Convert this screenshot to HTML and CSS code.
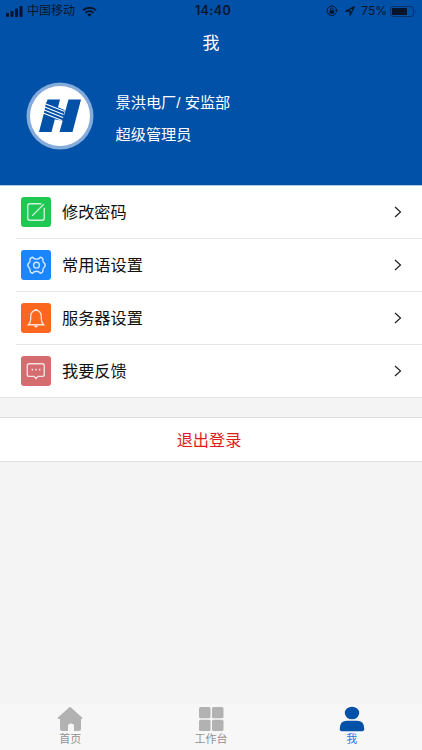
FILE: index.html
```html
<!DOCTYPE html>
<html lang="zh-CN">
<head>
    <meta charset="UTF-8">
    <meta name="viewport" content="width=device-width, initial-scale=1.0">
    <title>我</title>
    <link rel="stylesheet" href="styles.css">
</head>
<body>
    <div class="app">
        <header class="header">
            <div class="status-bar">
                <div class="status-left">
                    <svg class="signal" viewBox="0 0 17 11">
                        <rect x="0" y="7" width="3" height="4" rx="0.8"/>
                        <rect x="4.5" y="5" width="3" height="6" rx="0.8"/>
                        <rect x="9" y="2.5" width="3" height="8.5" rx="0.8"/>
                        <rect x="13.5" y="0" width="3" height="11" rx="0.8"/>
                    </svg>
                    <span class="carrier">中国移动</span>
                    <svg class="wifi" viewBox="0 0 15 11">
                        <path d="M1 4.2a9.5 9.5 0 0 1 13 0" fill="none" stroke="currentColor" stroke-width="2"/>
                        <path d="M3.5 6.8a5.8 5.8 0 0 1 8 0" fill="none" stroke="currentColor" stroke-width="1.8"/>
                        <path d="M5.3 8.6a3.2 3.2 0 0 1 4.4 0L7.5 10.8z"/>
                    </svg>
                </div>
                <span class="time">14:40</span>
                <div class="status-right">
                    <svg class="lock" viewBox="0 0 12 12">
                        <path d="M10.2 7.8a4.8 4.8 0 1 1 .4-2.6" fill="none" stroke="currentColor" stroke-width="1"/>
                        <path d="M9 5h3l-1.5 2.2z"/>
                        <rect x="3.5" y="5.3" width="4.6" height="3.5" rx="0.4"/>
                        <path d="M4.5 5.5V4.3a1.3 1.3 0 0 1 2.6 0v1.2" fill="none" stroke="currentColor" stroke-width="0.8"/>
                    </svg>
                    <svg class="location" viewBox="0 0 10 10">
                        <path d="M0.8 5L9.2 0.8L5.2 9.3L5 5z" fill="none" stroke="currentColor" stroke-width="1.3" stroke-linejoin="round"/>
                    </svg>
                    <span class="percent">75%</span>
                    <svg class="battery" viewBox="0 0 27 11">
                        <rect x="0.5" y="0.5" width="23" height="10" rx="2.5" fill="none" stroke="currentColor" stroke-opacity="0.5"/>
                        <rect x="2" y="2" width="15" height="7" rx="0.8"/>
                        <path d="M25 3.7q1.5 1.8 0 3.6z" fill-opacity="0.5"/>
                    </svg>
                </div>
            </div>
            <h1 class="title">我</h1>
            <div class="profile">
                <svg class="avatar" viewBox="0 0 68 68">
                    <circle cx="34" cy="34" r="33.5" fill="#84abd9"/>
                    <circle cx="34" cy="34" r="30" fill="#fff"/>
                    <path d="M21.5 17.5H34L25.500 50H13z M42.500 17.500H55L46.500 50H33.500z" fill="#0251a8"/>
                    <path d="M20 20L38.500 28L37.500 39L27 37L18 33z" fill="#0251a8"/>
                    <path d="M18 21.200L38 29.200 M17.500 24.400L37.500 32.400 M17 27.600L37 35.600 M16.500 30.800L36 38.600" stroke="#fff" stroke-width="1.100"/>
                </svg>
                <div class="profile-info">
                    <p>景洪电厂/ 安监部</p>
                    <p>超级管理员</p>
                </div>
            </div>
        </header>

        <!-- Settings -->
        <ul class="menu">
            <li class="menu-item">
                <span class="menu-icon green">
                    <svg viewBox="0 0 31 31">
                        <path d="M21 7H9a2 2 0 0 0-2 2v13a2 2 0 0 0 2 2h13a2 2 0 0 0 2-2V11M11.5 19.5L23.5 7.5"/>
                    </svg>
                </span>
                <span class="menu-label">修改密码</span>
                <svg class="arrow" viewBox="0 0 8 12"><path d="M1 1l5.5 5L1 11"/></svg>
            </li>
            <li class="menu-item">
                <span class="menu-icon blue">
                    <svg viewBox="0 0 31 31">
                        <path d="M12 7.500Q13.500 9.500 16 9.500T20 7.500Q23 8 22.700 11Q22.700 12.800 24 13.500Q26 15.700 24 18Q22.700 18.700 22.700 20.500Q23 23.500 20 24Q18.500 22 16 22T12 24Q9 23.500 9.300 20.500Q9.300 18.700 8 18Q6 15.700 8 13.500Q9.300 12.800 9.300 11Q9 8 12 7.500z"/>
                        <circle cx="16" cy="15.7" r="3"/>
                    </svg>
                </span>
                <span class="menu-label">常用语设置</span>
                <svg class="arrow" viewBox="0 0 8 12"><path d="M1 1l5.5 5L1 11"/></svg>
            </li>
            <li class="menu-item">
                <span class="menu-icon orange">
                    <svg viewBox="0 0 31 31">
                        <path d="M7.5 22.5Q10 20 10 17V13.500a5.500 6 0 0 1 11 0V17Q21 20 23.500 22.500zM14 7.500q1.500-1.500 3 0M14 23.500q1.500 2 3 0"/>
                    </svg>
                </span>
                <span class="menu-label">服务器设置</span>
                <svg class="arrow" viewBox="0 0 8 12"><path d="M1 1l5.5 5L1 11"/></svg>
            </li>
            <li class="menu-item">
                <span class="menu-icon pink">
                    <svg viewBox="0 0 31 31">
                        <path d="M8.500 8h13.500a2 2 0 0 1 2 2v9a2 2 0 0 1-2 2h-4.500l-2 2.200l-2-2.200h-5a2 2 0 0 1-2-2v-9a2 2 0 0 1 2-2z"/>
                        <path d="M11 14.200h1.500M14.700 14.200h1.500M18.500 14.200h1.500" stroke-width="1.8"/>
                    </svg>
                </span>
                <span class="menu-label">我要反馈</span>
                <svg class="arrow" viewBox="0 0 8 12"><path d="M1 1l5.5 5L1 11"/></svg>
            </li>
        </ul>

        <button class="logout-btn">退出登录</button>

        <!-- Bottom tabs -->
        <nav class="tab-bar">
            <a class="tab">
                <svg viewBox="0 0 26 26">
                    <path d="M12 1.5q1-1 2 0L25 11.5q1 1.5-.5 1.5H24v10q0 2-2 2h-5v-5q0-2.500-3-2.500t-3 2.500v5H5q-2 0-2-2V13h-1.500q-1.500 0-.5-1.500z"/>
                </svg>
                <span>首页</span>
            </a>
            <a class="tab">
                <svg viewBox="0 0 26 26">
                    <rect x="1" y="1" width="11.5" height="11.2" rx="1.5"/>
                    <rect x="14" y="1" width="11.5" height="11.2" rx="1.5"/>
                    <rect x="1" y="13.8" width="11.5" height="11.2" rx="1.5"/>
                    <rect x="14" y="13.8" width="11.5" height="11.2" rx="1.5"/>
                </svg>
                <span>工作台</span>
            </a>
            <a class="tab active">
                <svg viewBox="0 0 26 26">
                    <ellipse cx="13" cy="7" rx="7.2" ry="6.3"/>
                    <path d="M.7 23Q.7 14.700 8 14.700H18Q25.300 14.700 25.300 23Q25.300 25.200 23 25.200H3Q.7 25.200.7 23z"/>
                </svg>
                <span>我</span>
            </a>
        </nav>
    </div>
</body>
</html>
```
FILE: styles.css
```css
* {
    margin: 0;
    padding: 0;
    box-sizing: border-box;
}

body {
    background-color: #f4f4f4;
    color: #111;
    font-family: "Liberation Sans", "Noto Sans CJK SC", sans-serif;
}

.app {
    display: flex;
    flex-direction: column;
    height: 750px;
}

/* Header */
.header {
    height: 185px;
    background: #0251a8;
    color: #fff;
}

.status-bar {
    display: grid;
    grid-template-columns: 1fr auto 1fr;
    align-items: center;
    height: 22px;
    padding: 0 6px;
    color: #06152c;
    font-family: Inter, "Noto Sans CJK SC", sans-serif;
    font-size: 12px;
    line-height: 22px;
}

.status-bar svg {
    fill: currentColor;
}

.status-left,
.status-right {
    display: flex;
    align-items: center;
}

.status-right {
    justify-content: flex-end;
    margin-right: -1px;
}

.signal {
    width: 17px;
    height: 11px;
}

.carrier {
    margin: 0 7px 0 4px;
}

.wifi {
    width: 15px;
    height: 11px;
}

.time {
    font-size: 12.5px;
    font-weight: 600;
    letter-spacing: 0.4px;
    padding-left: 4px;
}

.lock {
    width: 12px;
    height: 12px;
    margin-right: 7px;
}

.location {
    width: 10px;
    height: 10px;
    margin-right: 6px;
}

.percent {
    margin-right: 3px;
}

.battery {
    width: 27px;
    height: 11px;
}

.title {
    height: 42px;
    padding-top: 1px;
    font-size: 17px;
    font-weight: 400;
    line-height: 42px;
    text-align: center;
}

.profile {
    display: flex;
    align-items: center;
    gap: 22px;
    padding: 17px 0 0 25.5px;
}

.avatar {
    width: 68px;
    height: 68px;
}

.profile-info {
    padding-top: 6px;
    font-size: 15.2px;
    line-height: 32px;
}

/* Settings list */
.menu {
    list-style: none;
    background: #fff;
    border-top: 1px solid #b5cbe3;
    border-bottom: 1px solid #e4e4e8;
}

.menu-item {
    display: flex;
    align-items: center;
    height: 53px;
    margin-left: 16px;
    padding: 0 20px 0 5px;
    border-bottom: 1px solid #e6e6e9;
}

.menu-item:last-child {
    height: 52px;
    border-bottom: none;
}

.menu-icon {
    width: 30px;
    height: 30px;
    border-radius: 3px;
}

.menu-icon svg {
    display: block;
    width: 100%;
    height: 100%;
    fill: none;
    stroke: #fff;
    stroke-opacity: 0.8;
    stroke-width: 1.4;
}

.green {
    background: #1ec853;
}

.blue {
    background: #1b86fc;
}

.orange {
    background: #fc6720;
}

.pink {
    background: #d56c70;
}

.menu-label {
    flex: 1;
    margin: -2px 0 0 11px;
    font-size: 16.2px;
}

.arrow {
    width: 8px;
    height: 12px;
    fill: none;
    stroke: #222;
    stroke-width: 1.2;
}

.logout-btn {
    height: 45px;
    margin-top: 19px;
    border: 1px solid #e0e0e0;
    border-width: 1px 0;
    background: #fff;
    color: #e11b1b;
    font-family: inherit;
    font-size: 16.2px;
    padding: 0 4px 1px 0;
}

/* Tab bar */
.tab-bar {
    display: flex;
    height: 46px;
    margin-top: auto;
    background: #f7f7f7;
}

.tab {
    flex: 1;
    display: flex;
    flex-direction: column;
    align-items: center;
    padding-top: 2px;
    color: #929292;
    font-size: 11px;
    line-height: 15px;
}

.tab svg {
    width: 26px;
    height: 26px;
    fill: #b2b2b2;
}

.tab.active {
    color: #2d77e5;
}

.tab.active svg {
    fill: #0251a8;
}
```
